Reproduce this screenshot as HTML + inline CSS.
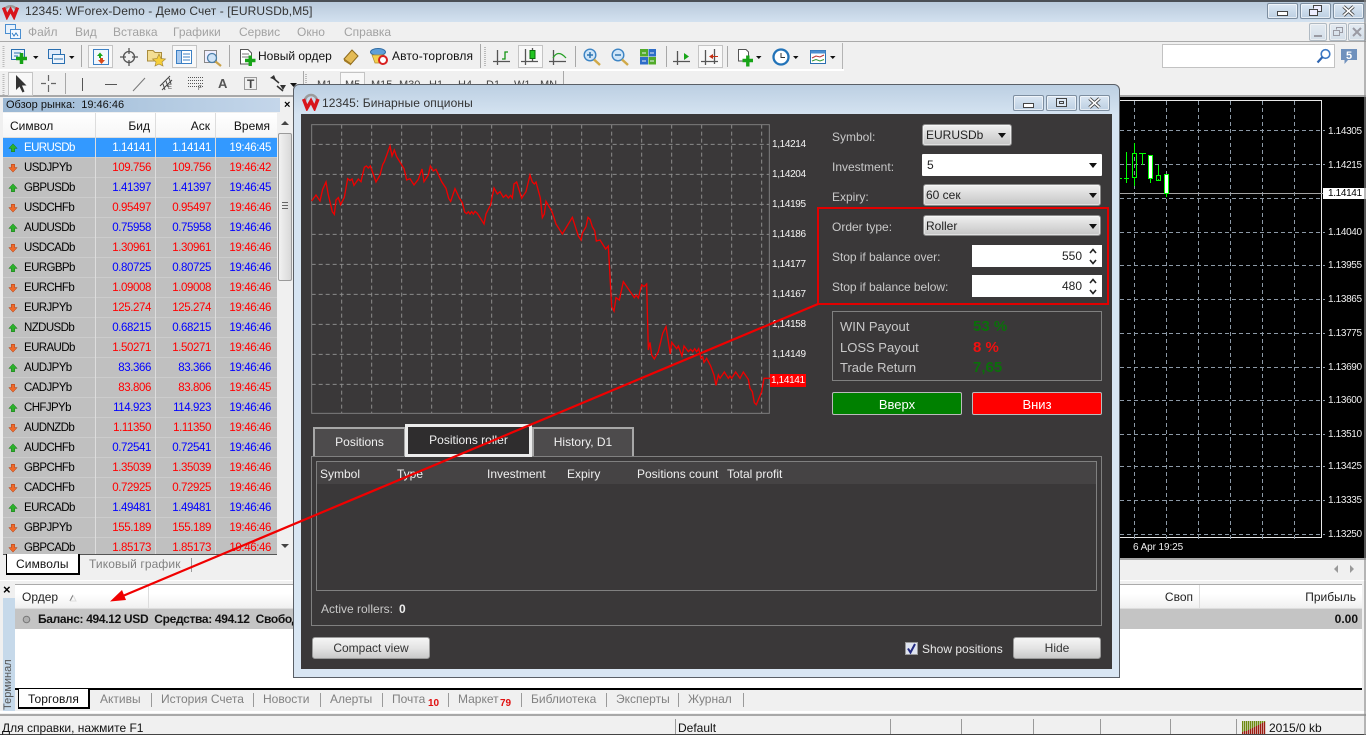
<!DOCTYPE html>
<html lang="ru">
<head>
<meta charset="utf-8">
<title>12345: WForex-Demo</title>
<style>
html,body{margin:0;padding:0;width:1366px;height:735px;overflow:hidden;background:#f0f0f0}
body{position:relative;font:12px/14px "Liberation Sans","Noto Sans CJK SC",sans-serif;color:#000}
div,span{box-sizing:border-box}
.a{position:absolute}
.t{position:absolute;white-space:nowrap;line-height:14px}
.m{color:#a2a2a2;top:25px}
.wb{position:absolute;border:1px solid #7d8ea0;border-radius:2px;background:linear-gradient(#dbe7f3,#bccfe2);box-shadow:inset 0 0 0 1px rgba(255,255,255,.6)}
.r{position:absolute;left:3px;width:274px;height:20px;margin-top:1px;background:#c0c0c0;border-bottom:1px solid #ccc}
.r b{position:absolute;top:3px;font-weight:normal;white-space:nowrap;line-height:14px;font-size:11.5px;letter-spacing:-.4px}
.r b.s{left:21px;color:#000;letter-spacing:-.6px}
.p1{right:126px}.p2{right:66px}.p3{right:6px}
.r i{position:absolute;top:0;width:1px;height:20px;background:#ddd}
.u b.p1,.u b.p2,.u b.p3{color:#0000ff}
.d b.p1,.d b.p2,.d b.p3{color:#ff0000}
.sel{background:#3399ff}.sel b{color:#fff!important}
.ar{position:absolute;left:5px;top:5px;width:10px;height:10px}
.lbl{color:#c9c9c9}
.cl{color:#f6f6f6;font-size:10px;left:772px;letter-spacing:-.35px;margin-top:1px}
.rl{color:#eee;font-size:10px;left:1328px;letter-spacing:-.35px;margin-top:1px}
.combo{position:absolute;border:1px solid #8a8a8a;border-radius:3px;background:linear-gradient(#efefef,#c5c5c5);color:#222;padding:3px 0 0 3px;box-shadow:inset 0 0 0 1px rgba(255,255,255,.45)}
.white{position:absolute;background:#fff;color:#222}
.tri{position:absolute;width:0;height:0;border-left:4px solid transparent;border-right:4px solid transparent;border-top:5px solid #111}
.btn{position:absolute;border:1px solid #999;border-radius:3px;background:linear-gradient(#f5f5f5,#e4e4e4 50%,#c9c9c9);text-align:center;color:#333;line-height:20px}
.tab{position:absolute;background:#4d4b4c;border:2px solid #a7a7a7;border-bottom:0;color:#f0f0f0;text-align:center;line-height:26px}
.hd{color:#efefef;top:467px}
.g{color:#808080}
.sep{position:absolute;width:1px;background:#9a9a9a}
</style>
</head>
<body>
<!-- main title -->
<div class="a" style="left:0;top:0;width:1366px;height:22px;background:linear-gradient(#b9cadb,#d3e1ef);border-top:2px solid #4a4f55"></div>
<svg class="a" style="left:1px;top:2px" width="20" height="18" viewBox="0 0 20 18"><path d="M3.500 8A6.500 6 0 0 1 15.500 8" fill="none" stroke="#9b9b9b" stroke-width="2.500"/><path d="M2.500 5.500 6 14.500 9.500 8 13 14.500 16.500 5.500" fill="none" stroke="#d8141c" stroke-width="3.400"/></svg>
<div class="t" style="left:25px;top:4px;color:#333;letter-spacing:.1px">12345: WForex-Demo - Демо Счет - [EURUSDb,M5]</div>
<div class="wb" style="left:1267px;top:3px;width:31px;height:16px"><div class="a" style="left:9px;top:7px;width:11px;height:5px;background:#fff;border:1px solid #444"></div></div>
<div class="wb" style="left:1300px;top:3px;width:31px;height:16px"><svg class="a" style="left:8px;top:1px" width="13" height="12"><path d="M4.500 3.500V.5H12.500V6.500H9M.5 4.500H8.500V10.500H.5Z" fill="#eef" stroke="#444"/></svg></div>
<div class="wb" style="left:1333px;top:3px;width:31px;height:16px"><svg class="a" style="left:8px;top:1px" width="13" height="12"><path d="M1.500 1.500 11.500 10.500M11.500 1.500 1.500 10.500" stroke="#444" stroke-width="3.400"/><path d="M1.500 1.500 11.500 10.500M11.500 1.500 1.500 10.500" stroke="#fff" stroke-width="1.600"/></svg></div>
<!-- menu -->
<div class="a" style="left:0;top:22px;width:1366px;height:20px;background:#f0f0f0;border-bottom:1px solid #aaa"></div>
<svg class="a" style="left:5px;top:24px" width="16" height="16"><rect x=".5" y=".5" width="10" height="9" fill="#e8f2fc" stroke="#4a8ed0"/><rect x="5.500" y="5.500" width="10" height="9" fill="#f4f9ff" stroke="#4a8ed0"/><path d="M7 9 9 12 11 9 13 12" fill="none" stroke="#2e7bc4"/></svg>
<div class="t m" style="left:28px">Файл</div><div class="t m" style="left:75px">Вид</div><div class="t m" style="left:113px">Вставка</div><div class="t m" style="left:173px">Графики</div><div class="t m" style="left:239px">Сервис</div><div class="t m" style="left:297px">Окно</div><div class="t m" style="left:344px">Справка</div>
<div class="wb" style="left:1309px;top:23px;width:18px;height:18px;opacity:.55"><div class="a" style="left:4px;top:11px;width:8px;height:2px;background:#556"></div></div>
<div class="wb" style="left:1329px;top:23px;width:18px;height:18px;opacity:.55"><svg class="a" style="left:3px;top:3px" width="11" height="10"><path d="M3.500 2.500V.5H9.500V5.500H7M.5 3.500H6.500V8.500H.5Z" fill="none" stroke="#556"/></svg></div>
<div class="wb" style="left:1348px;top:23px;width:18px;height:18px;opacity:.55"><svg class="a" style="left:3px;top:3px" width="11" height="10"><path d="M1 1 9 9M9 1 1 9" stroke="#556" stroke-width="2"/></svg></div>
<!-- toolbars -->
<div class="a" style="left:0;top:43px;width:1366px;height:27px;background:#f0f0f0"></div>
<div class="a" style="left:0;top:70px;width:1366px;height:27px;background:#f0f0f0;border-bottom:2px solid #a8a8a8"></div>
<div class="a" style="left:0;top:69px;width:844px;height:2px;background:#fff"></div>
<div class="a" style="left:842px;top:43px;width:1px;height:26px;background:#b4b4b4"></div>
<svg class="a" style="left:0;top:0" width="850" height="98" shape-rendering="geometricPrecision">
 <path d="M3.500 46V67M3.500 74V95M485 47V66M306 74V95" stroke="#bbb" stroke-width="2" stroke-dasharray="1 1"/>
 <path d="M81.500 45V67M229.500 45V67M480.500 44V68M575.500 46V67M666.500 46V67M727.500 46V67M65.500 73V94M303.500 71V97" stroke="#a8a8a8"/>
 <g fill="#f8f8f8" stroke="#c4c4c4"><rect x="88.500" y="45.500" width="24" height="22"/><rect x="172.500" y="45.500" width="24" height="22"/><rect x="518.500" y="45.500" width="24" height="22"/><rect x="698.500" y="45.500" width="24" height="22"/><rect x="8.500" y="72.500" width="24" height="23"/></g>
 <rect x="11.500" y="49.500" width="13" height="10" fill="#e7f0fa" stroke="#2a6fb0"/><path d="M14 53H21M14 56H18" stroke="#2a6fb0"/><path d="M16 58.500H27M21.500 53V64" stroke="#16a116" stroke-width="3.500"/>
 <path d="M33 56H38.500L35.800 59ZM69 56H74.500L71.800 59Z" fill="#111"/>
 <rect x="48.500" y="49.500" width="12" height="9" fill="#dfeafa" stroke="#2a6fb0"/><rect x="52.500" y="54.500" width="12" height="9" fill="#eef4fc" stroke="#2a6fb0"/><path d="M54 59H63" stroke="#2a6fb0"/>
 <rect x="93.500" y="49.500" width="15" height="15" fill="#f2f7fd" stroke="#3c80c4"/><path d="M97 56 100 52.500 103 56H101V58H99V56Z" fill="#19a619"/><path d="M100 58H103V60H105L101.500 64 98 60H100Z" fill="#d84a1a"/>
 <circle cx="129" cy="57" r="5.500" fill="none" stroke="#555" stroke-width="1.300"/><path d="M129 48V54M129 60V66M120 57H126M132 57H138" stroke="#555" stroke-width="1.300"/>
 <path d="M147.500 50.500H153L155 52.500H161.500V61H147.500Z" fill="#f3dd93" stroke="#a98c3c"/><path d="M159 54 161 58.500 165.500 59 162 62 163 66 159 64 155 66 156 62 152.500 59 157 58.500Z" fill="#f6cf3a" stroke="#a98c3c" stroke-width=".7"/>
 <rect x="176.500" y="50.500" width="15" height="13" fill="#fff" stroke="#3c80c4"/><rect x="176.500" y="50.500" width="5" height="13" fill="#a9caef" stroke="#3c80c4"/><path d="M183 54H190M183 57H190M183 60H190" stroke="#3c80c4"/>
 <rect x="204.500" y="50.500" width="12" height="12" fill="#eef" stroke="#888"/><circle cx="212" cy="58" r="4.500" fill="#cfe3f7" stroke="#4a7ea8" stroke-width="1.300"/><path d="M215.500 61.500 221 66" stroke="#c9a24a" stroke-width="2.200"/>
 <path d="M240.500 49.500H248L251.500 53V64H240.500Z" fill="#fff" stroke="#555"/><path d="M242 54H249M242 57H249" stroke="#777"/><path d="M245 60.500H255.500M250.250 55.500V66" stroke="#17a417" stroke-width="3.400"/>
 <path d="M344 59 352 50 358 56 351 64Z" fill="#e4bb55" stroke="#8b6a1e"/><path d="M344 59 351 64V65.500L344 61Z" fill="#a37a24"/>
 <ellipse cx="378" cy="52" rx="7.500" ry="3.500" fill="#5f9fd8" stroke="#2d6aa3"/><path d="M372 55H384L382 63H375Z" fill="#f2d050" stroke="#b08d2a" stroke-width=".7"/><circle cx="383" cy="60" r="4" fill="#fff" stroke="#d82020" stroke-width="2"/>
 <path d="M497.500 50V65M493 61.500H510" stroke="#555" stroke-width="1.300" fill="none"/><path d="M502 59H505V52H508" fill="none" stroke="#129412" stroke-width="1.300"/>
 <path d="M525.500 49V65M521 61.500H538M532.500 48V62" stroke="#555" stroke-width="1.300" fill="none"/><rect x="530" y="50.500" width="5" height="8" fill="#21c421" stroke="#0c700c"/>
 <path d="M553.500 50V65M549 61.500H566" stroke="#555" stroke-width="1.300" fill="none"/><path d="M553 58Q558 49 566 58" fill="none" stroke="#27a127" stroke-width="1.300"/>
 <circle cx="590" cy="55" r="5.800" fill="#cfe5f8" stroke="#3c84c4" stroke-width="1.400"/><path d="M587 55H593M590 52V58" stroke="#2f75b0" stroke-width="1.500"/><path d="M594 59.500 600 65" stroke="#d0a948" stroke-width="2.400"/>
 <circle cx="618" cy="55" r="5.800" fill="#cfe5f8" stroke="#3c84c4" stroke-width="1.400"/><path d="M615 55H621" stroke="#2f75b0" stroke-width="1.500"/><path d="M622 59.500 628 65" stroke="#d0a948" stroke-width="2.400"/>
 <rect x="640" y="49" width="8" height="7.500" fill="#52ab2a"/><rect x="648.500" y="49" width="7.500" height="7.500" fill="#2e6dc8"/><rect x="640" y="57" width="8" height="7.500" fill="#2e6dc8"/><rect x="648.500" y="57" width="7.500" height="7.500" fill="#52ab2a"/><path d="M642 53H646M650 53H654M642 61H646M650 61H654" stroke="#e8f0f8"/>
 <path d="M677.500 51V65M673 61.500H690" stroke="#555" stroke-width="1.300" fill="none"/><path d="M684 53 684 60 689 56.500Z" fill="#19a619"/>
 <path d="M705.500 50V65M701 61.500H718M714.500 49V64" stroke="#555" stroke-width="1.300" fill="none"/><path d="M709 56.500 713 54V59Z" fill="#c43014"/><path d="M713 56.500H718" stroke="#c43014"/>
 <path d="M738.500 49.500H746L748.500 52V61H738.500Z" fill="#fff" stroke="#555"/><path d="M742.500 60.500H753M747.800 55.500V66.500" stroke="#17a417" stroke-width="3.400"/>
 <path d="M756 56H761.500L758.800 59ZM793 56H798.500L795.800 59ZM830 56H835.500L832.800 59Z" fill="#111"/>
 <circle cx="781" cy="57" r="7.500" fill="#fff" stroke="#2273b8" stroke-width="2.300"/><path d="M781 53V57.500H785" fill="none" stroke="#333"/>
 <rect x="810.500" y="50.500" width="15" height="13" fill="#fff" stroke="#2a6fb0"/><rect x="810.500" y="50.500" width="15" height="3" fill="#4a8ed0"/><path d="M812 58 816 56 820 57 824 55" fill="none" stroke="#b33"/><path d="M812 61 816 59.500 820 61 824 59.500" fill="none" stroke="#393"/>
 <path d="M16 75V90L19.500 86.500 22.500 92.500 24.500 91.500 22 85.500H26.500Z" fill="#333"/>
 <path d="M48.500 75V81M48.500 85V92M41 83.500H46M51 83.500H56" stroke="#666" stroke-width="1.200"/>
 <path d="M82.500 78V91" stroke="#555"/><path d="M105 84.500H117" stroke="#555"/><path d="M133 91 145 78" stroke="#777"/>
 <path d="M160 86 170 76M162 90 172 80M163 84 165 90M166 81 168 87M169 78 171 84" stroke="#444"/>
 <path d="M188 77.500H203M188 80.500H203M188 83.500H203M188 86.500H203" stroke="#555" stroke-dasharray="1 1"/>
 <rect x="244.500" y="77.500" width="12" height="12" fill="none" stroke="#444" stroke-dasharray="1 1"/>
 <path d="M273 78 279 83M277 86 283 91" stroke="#333" stroke-width="1.500"/><path d="M270 78 274 75 276 80ZM280 85 286 85 283 90Z" fill="#333"/>
 <path d="M290 83H297L293.500 87Z" fill="#111"/>
</svg>
<div class="t" style="left:258px;top:49px;color:#111">Новый ордер</div>
<div class="t" style="left:392px;top:49px;color:#111;letter-spacing:.15px">Авто-торговля</div>
<div class="t" style="left:218px;top:77px;color:#555;font-weight:bold;font-size:13px">A</div>
<div class="t" style="left:247px;top:77px;color:#444;font-weight:bold">T</div>
<div class="t" style="left:168px;top:84px;color:#444;font-size:6px;line-height:8px">E</div>
<div class="t" style="left:198px;top:85px;color:#444;font-size:6px;line-height:8px">F</div>
<div class="a" style="left:340px;top:72px;width:25px;height:24px;background:#f8f8f8;border:1px solid #c4c4c4"></div>
<div class="t g" style="left:317px;top:78px;font-size:11px;color:#444">M1</div>
<div class="t g" style="left:345px;top:78px;font-size:11px;color:#444">M5</div>
<div class="t g" style="left:371px;top:78px;font-size:11px;color:#444">M15</div>
<div class="t g" style="left:399px;top:78px;font-size:11px;color:#444">M30</div>
<div class="t g" style="left:429px;top:78px;font-size:11px;color:#444">H1</div>
<div class="t g" style="left:458px;top:78px;font-size:11px;color:#444">H4</div>
<div class="t g" style="left:486px;top:78px;font-size:11px;color:#444">D1</div>
<div class="t g" style="left:514px;top:78px;font-size:11px;color:#444">W1</div>
<div class="t g" style="left:540px;top:78px;font-size:11px;color:#444">MN</div>
<div class="a" style="left:563px;top:71px;width:1px;height:26px;background:#a8a8a8"></div>
<!-- search -->
<div class="a" style="left:1162px;top:44px;width:173px;height:24px;background:#fff;border:1px solid #c2c2c2"></div>
<svg class="a" style="left:1315px;top:48px" width="18" height="16"><circle cx="10.500" cy="6" r="4.300" fill="none" stroke="#3c78c4" stroke-width="1.600"/><path d="M7.500 9 2.500 14.500" stroke="#2d64b0" stroke-width="2.200"/></svg>
<svg class="a" style="left:1340px;top:48px" width="18" height="18"><path d="M1 1H17V12H8L4.500 16V12H1Z" fill="#6f91bd"/><text x="9" y="11" text-anchor="middle" font-family="Liberation Sans" font-weight="bold" font-size="11" fill="#fff">5</text></svg>
<!-- market watch -->
<div class="a" style="left:0;top:97px;width:295px;height:483px;background:#f0f0f0"></div>
<div class="a" style="left:3px;top:98px;width:277px;height:14px;background:linear-gradient(90deg,#9bb8d4,#b4cbe2 60%,#c4d6ea)"></div>
<div class="t" style="left:6px;top:98px;color:#111;font-size:11px">Обзор рынка:&nbsp; 19:46:46</div>
<div class="t" style="left:284px;top:98px;font-weight:bold;font-size:11px">×</div>
<div class="a" style="left:3px;top:113px;width:274px;height:25px;background:linear-gradient(#fff,#f6f6f6);border-bottom:1px solid #ddd"></div>
<div class="a" style="left:95px;top:113px;width:1px;height:24px;background:#ddd"></div><div class="a" style="left:155px;top:113px;width:1px;height:24px;background:#ddd"></div><div class="a" style="left:215px;top:113px;width:1px;height:24px;background:#ddd"></div>
<div class="t" style="left:10px;top:119px;color:#111">Символ</div>
<div class="t" style="right:1216px;top:119px;color:#111">Бид</div>
<div class="t" style="right:1156px;top:119px;color:#111">Аск</div>
<div class="t" style="right:1096px;top:119px;color:#111">Время</div>
<svg width="0" height="0" style="position:absolute"><defs>
<symbol id="up" viewBox="0 0 12 12"><path d="M6 1 11 6.500H8V10.500H4V6.500H1Z" fill="#2cb12c" stroke="#157a15" stroke-width=".6"/></symbol>
<symbol id="dn" viewBox="0 0 12 12"><path d="M6 11 11 5.500H8V1.500H4V5.500H1Z" fill="#ef6a2a" stroke="#b33b10" stroke-width=".6"/></symbol>
</defs></svg>
<div class="r u sel" style="top:137px"><svg class="ar"><use href="#up"/></svg><b class="s">EURUSDb</b><b class="p1">1.14141</b><b class="p2">1.14141</b><b class="p3">19:46:45</b><i style="left:92px"></i><i style="left:152px"></i><i style="left:212px"></i></div>
<div class="r d" style="top:157px"><svg class="ar"><use href="#dn"/></svg><b class="s">USDJPYb</b><b class="p1">109.756</b><b class="p2">109.756</b><b class="p3">19:46:42</b><i style="left:92px"></i><i style="left:152px"></i><i style="left:212px"></i></div>
<div class="r u" style="top:177px"><svg class="ar"><use href="#up"/></svg><b class="s">GBPUSDb</b><b class="p1">1.41397</b><b class="p2">1.41397</b><b class="p3">19:46:45</b><i style="left:92px"></i><i style="left:152px"></i><i style="left:212px"></i></div>
<div class="r d" style="top:197px"><svg class="ar"><use href="#dn"/></svg><b class="s">USDCHFb</b><b class="p1">0.95497</b><b class="p2">0.95497</b><b class="p3">19:46:46</b><i style="left:92px"></i><i style="left:152px"></i><i style="left:212px"></i></div>
<div class="r u" style="top:217px"><svg class="ar"><use href="#up"/></svg><b class="s">AUDUSDb</b><b class="p1">0.75958</b><b class="p2">0.75958</b><b class="p3">19:46:46</b><i style="left:92px"></i><i style="left:152px"></i><i style="left:212px"></i></div>
<div class="r d" style="top:237px"><svg class="ar"><use href="#dn"/></svg><b class="s">USDCADb</b><b class="p1">1.30961</b><b class="p2">1.30961</b><b class="p3">19:46:46</b><i style="left:92px"></i><i style="left:152px"></i><i style="left:212px"></i></div>
<div class="r u" style="top:257px"><svg class="ar"><use href="#up"/></svg><b class="s">EURGBPb</b><b class="p1">0.80725</b><b class="p2">0.80725</b><b class="p3">19:46:46</b><i style="left:92px"></i><i style="left:152px"></i><i style="left:212px"></i></div>
<div class="r d" style="top:277px"><svg class="ar"><use href="#dn"/></svg><b class="s">EURCHFb</b><b class="p1">1.09008</b><b class="p2">1.09008</b><b class="p3">19:46:46</b><i style="left:92px"></i><i style="left:152px"></i><i style="left:212px"></i></div>
<div class="r d" style="top:297px"><svg class="ar"><use href="#dn"/></svg><b class="s">EURJPYb</b><b class="p1">125.274</b><b class="p2">125.274</b><b class="p3">19:46:46</b><i style="left:92px"></i><i style="left:152px"></i><i style="left:212px"></i></div>
<div class="r u" style="top:317px"><svg class="ar"><use href="#up"/></svg><b class="s">NZDUSDb</b><b class="p1">0.68215</b><b class="p2">0.68215</b><b class="p3">19:46:46</b><i style="left:92px"></i><i style="left:152px"></i><i style="left:212px"></i></div>
<div class="r d" style="top:337px"><svg class="ar"><use href="#dn"/></svg><b class="s">EURAUDb</b><b class="p1">1.50271</b><b class="p2">1.50271</b><b class="p3">19:46:46</b><i style="left:92px"></i><i style="left:152px"></i><i style="left:212px"></i></div>
<div class="r u" style="top:357px"><svg class="ar"><use href="#up"/></svg><b class="s">AUDJPYb</b><b class="p1">83.366</b><b class="p2">83.366</b><b class="p3">19:46:46</b><i style="left:92px"></i><i style="left:152px"></i><i style="left:212px"></i></div>
<div class="r d" style="top:377px"><svg class="ar"><use href="#dn"/></svg><b class="s">CADJPYb</b><b class="p1">83.806</b><b class="p2">83.806</b><b class="p3">19:46:45</b><i style="left:92px"></i><i style="left:152px"></i><i style="left:212px"></i></div>
<div class="r u" style="top:397px"><svg class="ar"><use href="#up"/></svg><b class="s">CHFJPYb</b><b class="p1">114.923</b><b class="p2">114.923</b><b class="p3">19:46:46</b><i style="left:92px"></i><i style="left:152px"></i><i style="left:212px"></i></div>
<div class="r d" style="top:417px"><svg class="ar"><use href="#dn"/></svg><b class="s">AUDNZDb</b><b class="p1">1.11350</b><b class="p2">1.11350</b><b class="p3">19:46:46</b><i style="left:92px"></i><i style="left:152px"></i><i style="left:212px"></i></div>
<div class="r u" style="top:437px"><svg class="ar"><use href="#up"/></svg><b class="s">AUDCHFb</b><b class="p1">0.72541</b><b class="p2">0.72541</b><b class="p3">19:46:46</b><i style="left:92px"></i><i style="left:152px"></i><i style="left:212px"></i></div>
<div class="r d" style="top:457px"><svg class="ar"><use href="#dn"/></svg><b class="s">GBPCHFb</b><b class="p1">1.35039</b><b class="p2">1.35039</b><b class="p3">19:46:46</b><i style="left:92px"></i><i style="left:152px"></i><i style="left:212px"></i></div>
<div class="r d" style="top:477px"><svg class="ar"><use href="#dn"/></svg><b class="s">CADCHFb</b><b class="p1">0.72925</b><b class="p2">0.72925</b><b class="p3">19:46:46</b><i style="left:92px"></i><i style="left:152px"></i><i style="left:212px"></i></div>
<div class="r u" style="top:497px"><svg class="ar"><use href="#up"/></svg><b class="s">EURCADb</b><b class="p1">1.49481</b><b class="p2">1.49481</b><b class="p3">19:46:46</b><i style="left:92px"></i><i style="left:152px"></i><i style="left:212px"></i></div>
<div class="r d" style="top:517px"><svg class="ar"><use href="#dn"/></svg><b class="s">GBPJPYb</b><b class="p1">155.189</b><b class="p2">155.189</b><b class="p3">19:46:46</b><i style="left:92px"></i><i style="left:152px"></i><i style="left:212px"></i></div>
<div class="r d" style="top:537px"><svg class="ar"><use href="#dn"/></svg><b class="s">GBPCADb</b><b class="p1">1.85173</b><b class="p2">1.85173</b><b class="p3">19:46:46</b><i style="left:92px"></i><i style="left:152px"></i><i style="left:212px"></i></div>
<!-- scrollbar -->
<div class="a" style="left:277px;top:113px;width:16px;height:442px;background:#f0f0f0"></div>
<div class="a" style="left:278px;top:133px;width:14px;height:148px;background:linear-gradient(90deg,#f2f2f2,#d8d8d8);border:1px solid #9a9a9a;border-radius:2px"></div>
<div class="a" style="left:282px;top:202px;width:6px;height:7px;border-top:1px solid #666;border-bottom:1px solid #666;background:linear-gradient(#666,#666) 0 2px/6px 1px no-repeat"></div>
<svg class="a" style="left:279px;top:119px" width="12" height="8"><path d="M2 6H10L6 2Z" fill="#444"/></svg>
<svg class="a" style="left:279px;top:542px" width="12" height="8"><path d="M2 2H10L6 6Z" fill="#444"/></svg>
<!-- market tabs -->
<div class="a" style="left:3px;top:554px;width:274px;height:26px;background:#f0f0f0;border-top:1px solid #555"></div>
<div class="a" style="left:6px;top:554px;width:74px;height:21px;background:#fff;border:1px solid #000;border-top:0;border-right-width:2px;border-bottom-width:2px"></div>
<div class="t" style="left:16px;top:557px;color:#111;letter-spacing:.1px">Символы</div>
<div class="t" style="left:89px;top:557px;color:#808080;letter-spacing:.1px">Тиковый график</div>
<div class="sep" style="left:191px;top:558px;height:14px"></div>
<!-- right chart -->
<div class="a" style="left:1112px;top:97px;width:254px;height:461px;background:#000"></div>
<svg class="a" style="left:1112px;top:97px" width="254" height="461">
 <path d="M210 3.500H.5M209.500 3V440.500H0" fill="none" stroke="#e8e8e8"/>
 <g transform="translate(-1112 -97)" fill="none">
 <path d="M1120 130.500H1325M1120 164.500H1325M1120 198.500H1325M1120 232.500H1325M1120 265.500H1325M1120 299.500H1325M1120 333.500H1325M1120 367.500H1325M1120 400.500H1325M1120 434.500H1325M1120 466.500H1325M1120 500.500H1325M1120 534.500H1325" stroke="#8c99a6" stroke-dasharray="4 3"/>
 <path d="M1134.500 101V541M1166.500 101V541M1198.500 101V541M1230.500 101V541M1262.500 101V541M1294.500 101V541" stroke="#8c99a6" stroke-dasharray="4 3"/>
 <path d="M1120 193.500H1323" stroke="#a4a4a4"/>
 <path d="M1120 178.500H1122M1126.500 152V183M1124 178.500H1129M1134.500 143V153M1134.500 177V186M1142.500 153V165M1139 153.500H1146M1150.500 178V183M1158.500 165V175M1158.500 179V181M1166.500 193V197" stroke="#00ff00"/>
 <rect x="1132.500" y="153.500" width="4" height="24" stroke="#00ff00"/>
 <rect x="1148.500" y="155.500" width="4" height="23" fill="#fff" stroke="#00ff00"/>
 <rect x="1156.500" y="175.500" width="4" height="5" stroke="#00ff00"/>
 <rect x="1164.500" y="174.500" width="4" height="19" fill="#fff" stroke="#00ff00"/>
 </g>
</svg>
<div class="t rl" style="top:124px">1.14305</div><div class="t rl" style="top:158px">1.14215</div>
<div class="a" style="left:1323px;top:188px;width:43px;height:11px;background:#fff"></div>
<div class="t rl" style="top:186px;color:#000">1.14141</div>
<div class="t rl" style="top:225px">1.14040</div><div class="t rl" style="top:258px">1.13955</div><div class="t rl" style="top:292px">1.13865</div><div class="t rl" style="top:326px">1.13775</div><div class="t rl" style="top:360px">1.13690</div><div class="t rl" style="top:393px">1.13600</div><div class="t rl" style="top:427px">1.13510</div><div class="t rl" style="top:459px">1.13425</div><div class="t rl" style="top:493px">1.13335</div><div class="t rl" style="top:527px">1.13250</div>
<div class="t rl" style="left:1133px;top:540px;letter-spacing:-.1px">6 Apr 19:25</div>
<!-- terminal -->
<div class="a" style="left:295px;top:558px;width:1071px;height:2px;background:#a8a8a8"></div>
<div class="a" style="left:295px;top:560px;width:1071px;height:24px;background:#f0f0f0"></div>
<svg class="a" style="left:1331px;top:564px" width="30" height="10"><path d="M7 1V9L3 5ZM19 1V9L23 5Z" fill="#999"/></svg>
<div class="a" style="left:0;top:580px;width:1366px;height:1px;background:#fff"></div>
<div class="a" style="left:0;top:581px;width:1366px;height:134px;background:#f0f0f0"></div>
<div class="a" style="left:15px;top:584px;width:1347px;height:104px;background:#fff;border-top:1px solid #aaa"></div>
<div class="a" style="left:15px;top:594px;width:1347px;height:15px;background:linear-gradient(#fff,#f0f0f0);border-bottom:1px solid #ddd"></div>
<div class="a" style="left:148px;top:585px;width:1px;height:23px;background:#ddd"></div>
<div class="a" style="left:1199px;top:585px;width:1px;height:23px;background:#ddd"></div>
<div class="t" style="left:22px;top:590px;color:#222">Ордер</div>
<svg class="a" style="left:68px;top:593px" width="10" height="10"><path d="M2 8 5 2" stroke="#777"/><path d="M5 2 8 8H2" fill="none" stroke="#ddd"/></svg>
<div class="t" style="right:173px;top:590px;color:#222">Своп</div>
<div class="t" style="right:10px;top:590px;color:#222">Прибыль</div>
<div class="a" style="left:15px;top:609px;width:1347px;height:20px;background:#c4c4c4"></div>
<svg class="a" style="left:22px;top:615px" width="9" height="9"><circle cx="4.500" cy="4.500" r="3.300" fill="#b0b0b0" stroke="#777"/></svg>
<div class="t" style="left:38px;top:612px;font-weight:bold;color:#111;letter-spacing:-.33px">Баланс: 494.12 USD&nbsp; Средства: 494.12&nbsp; Свободно</div>
<div class="t" style="right:8px;top:612px;font-weight:bold;color:#111">0.00</div>
<div class="a" style="left:3px;top:598px;width:12px;height:113px;background:#c6d9ea"></div>
<div class="t" style="left:3px;top:583px;font-weight:bold;font-size:13px">×</div>
<div class="t" style="left:1px;top:696px;transform:rotate(-90deg);transform-origin:7px 7px;color:#555;font-size:11px">Терминал</div>
<div class="a" style="left:15px;top:688px;width:1347px;height:2px;background:#000"></div>
<div class="a" style="left:18px;top:689px;width:72px;height:20px;background:#fff;border:1px solid #000;border-right-width:2px;border-bottom-width:2px;border-top:0"></div>
<div class="t" style="left:28px;top:692px;color:#111;letter-spacing:.1px">Торговля</div>
<div class="t g" style="left:100px;top:692px">Активы</div><div class="sep" style="left:151px;top:693px;height:14px"></div>
<div class="t g" style="left:161px;top:692px">История Счета</div><div class="sep" style="left:253px;top:693px;height:14px"></div>
<div class="t g" style="left:263px;top:692px">Новости</div><div class="sep" style="left:320px;top:693px;height:14px"></div>
<div class="t g" style="left:330px;top:692px">Алерты</div><div class="sep" style="left:382px;top:693px;height:14px"></div>
<div class="t g" style="left:392px;top:692px">Почта</div><div class="t" style="left:428px;top:697px;color:#e01010;font-size:10px;font-weight:bold">10</div><div class="sep" style="left:448px;top:693px;height:14px"></div>
<div class="t g" style="left:458px;top:692px">Маркет</div><div class="t" style="left:500px;top:697px;color:#e01010;font-size:10px;font-weight:bold">79</div><div class="sep" style="left:521px;top:693px;height:14px"></div>
<div class="t g" style="left:531px;top:692px">Библиотека</div><div class="sep" style="left:606px;top:693px;height:14px"></div>
<div class="t g" style="left:616px;top:692px">Эксперты</div><div class="sep" style="left:678px;top:693px;height:14px"></div>
<div class="t g" style="left:688px;top:692px">Журнал</div><div class="sep" style="left:743px;top:693px;height:14px"></div>
<!-- status -->
<div class="a" style="left:0;top:711px;width:1366px;height:2px;background:#fff"></div>
<div class="a" style="left:0;top:714px;width:1366px;height:2px;background:#a8a8a8"></div>
<div class="a" style="left:0;top:716px;width:1366px;height:19px;background:#f0f0f0;border-bottom:1px solid #444"></div>
<div class="a" style="left:1364px;top:0;width:2px;height:735px;background:#8c8c8c;opacity:.6"></div>
<div class="t" style="left:2px;top:721px;color:#111">Для справки, нажмите F1</div>
<div class="t" style="left:678px;top:721px;color:#111">Default</div>
<div class="sep" style="left:675px;top:719px;height:15px"></div><div class="sep" style="left:890px;top:719px;height:15px"></div><div class="sep" style="left:961px;top:719px;height:15px"></div><div class="sep" style="left:1033px;top:719px;height:15px"></div><div class="sep" style="left:1100px;top:719px;height:15px"></div><div class="sep" style="left:1170px;top:719px;height:15px"></div><div class="sep" style="left:1236px;top:719px;height:15px"></div>
<svg class="a" style="left:1242px;top:721px" width="24" height="13"><path d="M.5 0V11M2.500 0V10M4.500 0V10M6.500 0V9M8.500 0V8M10.500 0V7M12.500 0V6M14.500 0V5M16.500 0V4M18.500 0V3M20.500 0V2M22.500 0V1" stroke="#6e8a10" stroke-width="1.400"/><path d="M.5 11V13M2.500 10V13M4.500 10V13M6.500 9V13M8.500 8V13M10.500 7V13M12.500 6V13M14.500 5V13M16.500 4V13M18.500 3V13M20.500 2V13M22.500 1V13" stroke="#9b1c10" stroke-width="1.400"/></svg>
<div class="t" style="left:1269px;top:721px;color:#111">2015/0 kb</div>
<!-- dialog -->
<div class="a" style="left:293px;top:84px;width:827px;height:594px;border:1px solid #5a5f66;border-radius:6px 6px 0 0;background:linear-gradient(#bccfe2 0,#d5e3f1 30px,#d9e6f3 100%)"></div>
<svg class="a" style="left:302px;top:93px" width="18" height="18" viewBox="0 0 18 18"><path d="M3 8A6 6 0 0 1 15 8" fill="none" stroke="#9b9b9b" stroke-width="2.500"/><path d="M1.500 6 5 15 9 8 12.500 15 16 6" fill="none" stroke="#d8141c" stroke-width="3.400"/></svg>
<div class="t" style="left:322px;top:96px;color:#333;letter-spacing:.1px">12345: Бинарные опционы</div>
<div class="wb" style="left:1013px;top:95px;width:31px;height:16px"><div class="a" style="left:9px;top:7px;width:11px;height:5px;background:#fff;border:1px solid #444"></div></div>
<div class="wb" style="left:1046px;top:95px;width:31px;height:16px"><div class="a" style="left:9px;top:2px;width:11px;height:9px;border:1px solid #444;background:#dde8f3"><div class="a" style="left:2px;top:2px;width:5px;height:3px;border:1px solid #444"></div></div></div>
<div class="wb" style="left:1079px;top:95px;width:31px;height:16px"><svg class="a" style="left:8px;top:1px" width="13" height="12"><path d="M1.500 1.500 11.500 10.500M11.500 1.500 1.500 10.500" stroke="#444" stroke-width="3.400"/><path d="M1.500 1.500 11.500 10.500M11.500 1.500 1.500 10.500" stroke="#fff" stroke-width="1.600"/></svg></div>
<div class="a" style="left:301px;top:114px;width:811px;height:555px;background:#3a3839"></div>
<!-- dialog chart -->
<svg class="a" style="left:300px;top:110px" width="520" height="310" viewBox="0 0 1560 930">
 <path d="M125 44V910M215 44V910M305 44V910M395 44V910M485 44V910M575 44V910M665 44V910M755 44V910M845 44V910M935 44V910M1025 44V910M1115 44V910M1205 44V910M1295 44V910M1385 44V910M35 103H1408M35 193H1408M35 283H1408M35 373H1408M35 463H1408M35 553H1408M35 643H1408M35 733H1408M35 823H1408" fill="none" stroke="#8b8b8b" stroke-width="3" stroke-dasharray="12 9"/>
 <rect x="35" y="44" width="1373" height="866" fill="none" stroke="#7d7d7d" stroke-width="3"/>
 <path d="M35 273 48 255 60 273 68 238 78 216 85 255 97 305 103 313 108 270 115 263 122 284 133 262 143 206 150 212 156 207 162 226 175 207 183 215 193 172 199 168 205 174 211 168 228 216 240 195 248 164 253 155 270 108 276 138 283 120 290 140 312 176 320 210 330 206 342 225 355 208 366 177 372 215 385 195 391 168 400 183 408 178 425 215 438 235 446 265 452 274 465 236 478 264 487 278 494 306 500 311 505 305 510 312 515 305 520 312 525 304 532 310 552 342 558 312 572 284 582 234 592 252 600 245 610 262 618 255 625 264 632 256 637 264 642 222 650 216 665 265 678 245 690 195 697 216 703 222 708 216 721 264 727 323 733 312 738 274 756 305 768 342 787 372 817 322 835 378 843 390 847 370 858 350 864 322 870 328 877 350 884 362 889 393 900 390 917 417 925 408 935 590 942 603 948 563 958 570 970 515 1003 563 1008 555 1015 564 1025 524 1032 530 1040 522 1045 720 1050 697 1055 735 1063 747 1075 725 1088 670 1098 650 1111 732 1115 697 1130 716 1135 708 1146 738 1152 708 1165 725 1172 718 1178 725 1184 716 1190 725 1196 716 1203 745 1208 740 1212 757 1220 745 1232 768 1242 795 1248 826 1255 795 1260 805 1273 786 1285 805 1290 798 1295 805 1307 786 1320 805 1330 786 1345 808 1350 835 1357 845 1363 878 1369 884 1385 845 1392 805 1410 805" fill="none" stroke="#ee0000" stroke-width="4"/>
</svg>
<div class="t cl" style="top:137px">1,14214</div><div class="t cl" style="top:167px">1,14204</div><div class="t cl" style="top:197px">1,14195</div><div class="t cl" style="top:227px">1,14186</div><div class="t cl" style="top:257px">1,14177</div><div class="t cl" style="top:287px">1,14167</div><div class="t cl" style="top:317px">1,14158</div><div class="t cl" style="top:347px">1,14149</div>
<div class="a" style="left:770px;top:374px;width:36px;height:13px;background:#ff0000"></div>
<div class="t cl" style="top:373px;left:771px;color:#fff">1,14141</div>
<!-- form -->
<div class="t lbl" style="left:832px;top:130px">Symbol:</div>
<div class="combo" style="left:922px;top:124px;width:90px;height:22px">EURUSDb<span class="tri" style="left:75px;top:8px"></span></div>
<div class="t lbl" style="left:832px;top:160px">Investment:</div>
<div class="white" style="left:922px;top:154px;width:180px;height:22px;padding:4px 0 0 5px;border-radius:1px">5<span class="tri" style="left:167px;top:9px"></span></div>
<div class="t lbl" style="left:832px;top:190px">Expiry:</div>
<div class="combo" style="left:923px;top:184px;width:178px;height:22px;padding-left:2px">60 сек<span class="tri" style="left:165px;top:8px"></span></div>
<div class="t lbl" style="left:832px;top:220px">Order type:</div>
<div class="combo" style="left:923px;top:215px;width:178px;height:21px;padding-left:2px">Roller<span class="tri" style="left:165px;top:8px"></span></div>
<div class="t lbl" style="left:832px;top:250px;letter-spacing:-.05px">Stop if balance over:</div>
<div class="white" style="left:972px;top:245px;width:130px;height:22px"><span class="t" style="right:20px;top:4px">550</span><svg class="a" style="left:115px;top:2px" width="12" height="18"><path d="M3 6 6 2.500 9 6M3 13 6 16.500 9 13" fill="none" stroke="#222" stroke-width="1.600"/></svg></div>
<div class="t lbl" style="left:832px;top:280px;letter-spacing:-.05px">Stop if balance below:</div>
<div class="white" style="left:972px;top:275px;width:130px;height:22px"><span class="t" style="right:20px;top:4px">480</span><svg class="a" style="left:115px;top:2px" width="12" height="18"><path d="M3 6 6 2.500 9 6M3 13 6 16.500 9 13" fill="none" stroke="#222" stroke-width="1.600"/></svg></div>
<div class="a" style="left:832px;top:311px;width:270px;height:70px;border:1px solid #808080"></div>
<div class="t" style="left:840px;top:320px;font-size:13px;color:#c9c9c9">WIN Payout</div>
<div class="t" style="left:840px;top:341px;font-size:13px;color:#c9c9c9">LOSS Payout</div>
<div class="t" style="left:840px;top:361px;font-size:13px;color:#c9c9c9">Trade Return</div>
<div class="t" style="left:973px;top:320px;font-size:15px;font-weight:bold;color:#0a700a">53 %</div>
<div class="t" style="left:973px;top:341px;font-size:15px;font-weight:bold;color:#f01010">8 %</div>
<div class="t" style="left:973px;top:361px;font-size:15px;font-weight:bold;color:#0a700a">7,65</div>
<div class="a" style="left:832px;top:392px;width:130px;height:23px;background:#008000;border:1px solid #bbb;border-radius:2px;color:#fff;text-align:center;line-height:23px;font-size:13px">Вверх</div>
<div class="a" style="left:972px;top:392px;width:130px;height:23px;background:#ff0000;border:1px solid #bbb;border-radius:2px;color:#fff;text-align:center;line-height:23px;font-size:13px">Вниз</div>
<!-- tabs -->
<div class="a" style="left:311px;top:456px;width:791px;height:170px;border:1px solid #808080"></div>
<div class="tab" style="left:313px;top:427px;width:93px;height:29px">Positions</div>
<div class="tab" style="left:532px;top:427px;width:102px;height:29px">History, D1</div>
<div class="a" style="left:405px;top:424px;width:127px;height:33px;background:#2f2d2e;border:3px solid #ececec;color:#f0f0f0;text-align:center;line-height:27px">Positions roller</div>
<div class="a" style="left:316px;top:461px;width:781px;height:130px;border:1px solid #808080"></div>
<div class="a" style="left:317px;top:462px;width:779px;height:22px;background:#454344"></div>
<div class="t hd" style="left:320px">Symbol</div><div class="t hd" style="left:397px">Type</div><div class="t hd" style="left:487px">Investment</div><div class="t hd" style="left:567px">Expiry</div><div class="t hd" style="left:637px">Positions count</div><div class="t hd" style="left:727px">Total profit</div>
<div class="t lbl" style="left:321px;top:602px">Active rollers:</div>
<div class="t" style="left:399px;top:602px;color:#eee;font-weight:bold">0</div>
<div class="btn" style="left:312px;top:637px;width:118px;height:22px">Compact view</div>
<div class="a" style="left:905px;top:642px;width:13px;height:13px;background:#dfe4f0;border:1px solid #999"></div>
<svg class="a" style="left:905px;top:642px" width="13" height="13"><path d="M3 6.500 5.500 10.500 10 2" fill="none" stroke="#232a80" stroke-width="2"/></svg>
<div class="t" style="left:922px;top:642px;color:#e8e8e8">Show positions</div>
<div class="btn" style="left:1013px;top:637px;width:88px;height:22px">Hide</div>
<!-- annotation -->
<svg class="a" style="left:0;top:0;pointer-events:none" width="1366" height="735">
 <rect x="818" y="208" width="290" height="96" fill="none" stroke="#e20000" stroke-width="2"/>
 <path d="M818 304 118 598" stroke="#f00000" stroke-width="2.200"/>
 <path d="M110 601.500 122 590 126 600Z" fill="#f00000"/>
</svg>
</body>
</html>
